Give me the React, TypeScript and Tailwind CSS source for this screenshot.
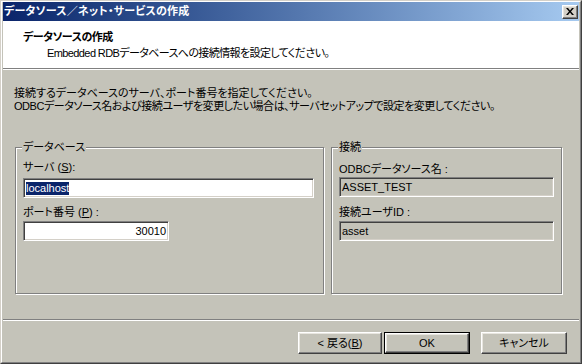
import type { ReactNode } from 'react';

const sunken =
  'border border-t-[#808080] border-l-[#808080] border-b-white border-r-white shadow-[inset_1px_1px_0_#404040,inset_-1px_-1px_0_#d4d0c8]';
const raised =
  'border border-t-white border-l-white border-b-[#404040] border-r-[#404040] shadow-[inset_-1px_-1px_0_#808080,inset_1px_1px_0_#e8e6e0]';

function GroupBox({ label, className, children }: { label: string; className: string; children: ReactNode }) {
  return (
    <div className={`relative border border-[#808080] shadow-[1px_1px_0_#fff,inset_1px_1px_0_#fff] ${className}`}>
      <span className="absolute left-[6px] top-[-8px] bg-[#c4c3b9] px-[1px] leading-[14px]">{label}</span>
      {children}
    </div>
  );
}

function Field({ children, className }: { children: ReactNode; className: string }) {
  return <div className={`${sunken} h-[20px] flex items-center px-[2px] ${className}`}>{children}</div>;
}

export default function App() {
  return (
    <div className="w-[582px] h-[364px] border border-t-[#d4d0c8] border-l-[#d4d0c8] border-r-[#404040] border-b-[#404040] bg-[#c4c3b9] font-['Liberation_Sans','Noto_Sans_CJK_JP',sans-serif] text-[11px] text-black [font-feature-settings:'palt']">
      <div className="h-full flex flex-col border border-t-white border-l-white border-r-[#808080] border-b-[#808080] px-[1px]">
        {/* title bar */}
        <div className="h-[19px] shrink-0 flex items-center justify-between bg-gradient-to-r from-[#0a246a] to-[#a6caf0] pl-[1px] pr-[1px]">
          <span className="text-white font-bold text-[11px] leading-none tracking-[0.2px]">データソース／ネット・サービスの作成</span>
          <button className={`${raised} w-[16px] h-[14px] bg-[#d4d0c8] flex items-center justify-center`}>
            <svg width="8" height="7" viewBox="0 0 8 7">
              <path d="M0 0h2l2 2.5L6 0h2L5 3.5 8 7H6L4 4.5 2 7H0l3-3.5z" fill="#000" />
            </svg>
          </button>
        </div>

        {/* header */}
        <div className="h-[48px] shrink-0 bg-white pl-[20px] pt-[9px] border-b border-b-[#808080] shadow-[0_1px_0_#fff]">
          <div className="font-bold leading-[14px] tracking-[-0.5px]">データソースの作成</div>
          <div className="pl-[24px] mt-[2px] leading-[14px] tracking-[-0.6px]">Embedded RDBデータベースへの接続情報を設定してください。</div>
        </div>

        {/* body */}
        <div className="flex-1 flex flex-col pt-[18px]">
          <div className="h-[26px] pl-[11px] leading-[13px]">
            <p>接続するデータベースのサーバ、ポート番号を指定してください。</p>
            <p className="tracking-[-0.45px]">ODBCデータソース名および接続ユーザを変更したい場合は、サーバセットアップで設定を変更してください。</p>
          </div>

          <div className="flex gap-[7px] pl-[12px] mt-[34px]">
            <GroupBox label="データベース" className="w-[309px] h-[147px] px-[7px] pt-[12px]">
              <div className="leading-[14px]">
                サーバ (<span className="underline">S</span>):
              </div>
              <Field className="mt-[4px] w-[291px] bg-white">
                <span className="bg-[#0a246a] text-white leading-[13px]">localhost</span>
              </Field>
              <div className="mt-[7px] leading-[14px]">
                ポート番号 (<span className="underline">P</span>) :
              </div>
              <Field className="mt-[2px] w-[146px] bg-white justify-end">
                <span className="leading-[13px]">30010</span>
              </Field>
            </GroupBox>

            <GroupBox label="接続" className="w-[231px] h-[147px] px-[7px] pt-[14px]">
              <div className="leading-[14px]">ODBCデータソース名 :</div>
              <Field className="mt-[1px] w-[215px]">
                <span className="leading-[13px]">ASSET_TEST</span>
              </Field>
              <div className="mt-[8px] leading-[14px]">接続ユーザID :</div>
              <Field className="mt-[2px] w-[215px]">
                <span className="leading-[13px]">asset</span>
              </Field>
            </GroupBox>
          </div>

          <div className="mt-[25px] h-[2px] border-t border-t-[#808080] border-b border-b-white" />

          <div className="flex justify-end pr-[12px] mt-[11px]">
            <button className={`${raised} w-[84px] h-[22px] bg-[#c4c3b9]`}>
              &lt; 戻る(<span className="underline">B</span>)
            </button>
            <button className="ml-[2px] w-[86px] h-[22px] border border-black bg-[#c4c3b9]">
              <div className={`${raised} h-full flex items-center justify-center`}>OK</div>
            </button>
            <button className={`${raised} ml-[11px] w-[86px] h-[22px] bg-[#c4c3b9]`}>キャンセル</button>
          </div>
        </div>
      </div>
    </div>
  );
}
